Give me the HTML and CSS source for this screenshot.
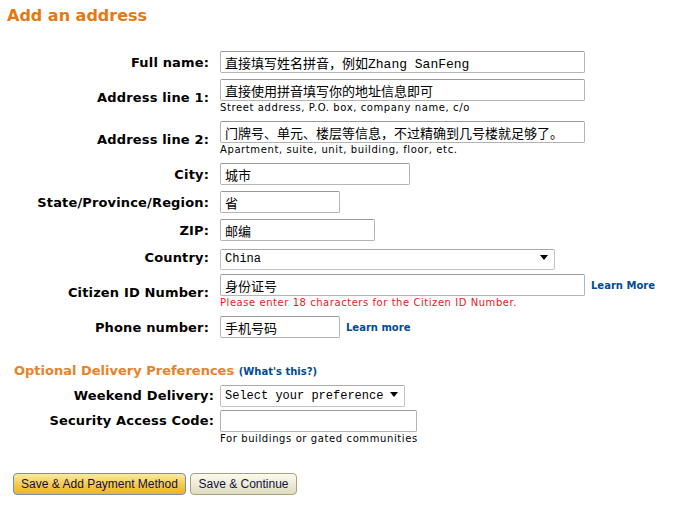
FILE: index.html
```html
<!DOCTYPE html>
<html lang="en">
<head>
  <meta charset="UTF-8" />
  <title>Add an address</title>
  <link rel="stylesheet" href="styles.css">
</head>
<body>
<h1 class="page-title">Add an address</h1>

<form class="address-form">
  <div class="form-grid">
    <label class="field-label" for="full-name">Full name:</label>
    <div class="field">
      <input id="full-name" class="text-input w-long" value="直接填写姓名拼音，例如Zhang SanFeng">
    </div>

    <label class="field-label" for="addr1">Address line 1:</label>
    <div class="field">
      <input id="addr1" class="text-input w-long" value="直接使用拼音填写你的地址信息即可">
      <div class="hint">Street address, P.O. box, company name, c/o</div>
    </div>

    <label class="field-label" for="addr2">Address line 2:</label>
    <div class="field">
      <input id="addr2" class="text-input w-long" value="门牌号、单元、楼层等信息，不过精确到几号楼就足够了。">
      <div class="hint">Apartment, suite, unit, building, floor, etc.</div>
    </div>

    <label class="field-label" for="city">City:</label>
    <div class="field">
      <input id="city" class="text-input w-city" value="城市">
    </div>

    <label class="field-label" for="state">State/Province/Region:</label>
    <div class="field">
      <input id="state" class="text-input w-short" value="省">
    </div>

    <label class="field-label" for="zip">ZIP:</label>
    <div class="field">
      <input id="zip" class="text-input w-zip" value="邮编">
    </div>

    <label class="field-label" for="country">Country:</label>
    <div class="field">
      <div class="select-box w-country">
        <select id="country" class="select-input">
          <option>China</option>
        </select>
      </div>
    </div>

    <label class="field-label" for="citizen">Citizen ID Number:</label>
    <div class="field">
      <div class="field-row">
        <input id="citizen" class="text-input w-long" value="身份证号">
        <a href="#" class="help-link">Learn More</a>
      </div>
      <div class="hint error">Please enter 18 characters for the Citizen ID Number.</div>
    </div>

    <label class="field-label" for="phone">Phone number:</label>
    <div class="field">
      <div class="field-row">
        <input id="phone" class="text-input w-short" value="手机号码">
        <a href="#" class="help-link">Learn more</a>
      </div>
    </div>
  </div>

  <h2 class="section-title">Optional Delivery Preferences <a href="#" class="whats-this">(What's this?)</a></h2>

  <div class="form-grid form-grid-wide">
    <label class="field-label" for="weekend">Weekend Delivery:</label>
    <div class="field">
      <div class="select-box tall w-weekend">
        <select id="weekend" class="select-input">
          <option>Select your preference</option>
        </select>
      </div>
    </div>

    <label class="field-label top" for="sac">Security Access Code:</label>
    <div class="field">
      <input id="sac" class="text-input w-sac" value="">
      <div class="hint">For buildings or gated communities</div>
    </div>
  </div>

  <div class="actions">
    <button type="button" class="btn btn-primary">Save &amp; Add Payment Method</button>
    <button type="button" class="btn btn-secondary">Save &amp; Continue</button>
  </div>
</form>
</body>
</html>
```

FILE: styles.css
```css
:root { --orange:#E47911; --link:#004B91; --text:#000; --border:#b4b4b4; }
* { box-sizing: border-box; }
body { margin:0; background:#fff; color:var(--text); font-family:'DejaVu Sans',Verdana,sans-serif; }

.page-title { margin:0; padding:5px 0 0 7px; line-height:22px; font-size:16px; font-weight:bold; color:var(--orange); }

.address-form { margin-top:24px; }
.form-grid { display:grid; grid-template-columns:209px 1fr; column-gap:11px; row-gap:6px; align-items:center; }
.form-grid-wide { grid-template-columns:214px 1fr; column-gap:6px; row-gap:4px; }
.field-label { text-align:right; font-size:13px; font-weight:bold; letter-spacing:.15px; white-space:nowrap; }
.field-label.top { align-self:start; line-height:22px; }
.field { display:flex; flex-direction:column; align-items:flex-start; }
.field-row { display:flex; align-items:center; gap:6px; }

.text-input { height:22px; padding:0 4px; border:1px solid var(--border); border-top-color:#999; border-radius:2px; font-family:'Liberation Mono','Noto Sans CJK SC',monospace; font-size:13px; color:#000; background:#fff; }
.w-long { width:365px; }
.w-city { width:190px; }
.w-short { width:120px; }
.w-zip { width:155px; }
.w-country { width:335px; }
.w-weekend { width:185px; }
.w-sac { width:197px; }

.select-box { position:relative; height:21px; }
.select-box.tall, .select-box.tall .select-input { height:22px; }
.select-box::after { content:''; position:absolute; right:7px; top:8px; border-left:4px solid transparent; border-right:4px solid transparent; border-top:5px solid #000; pointer-events:none; }
.select-input { appearance:none; -webkit-appearance:none; width:100%; height:21px; padding:0 4px; border:1px solid #c3c3c3; border-top-color:#aaa; border-radius:2px; background:#fff; font-family:'Liberation Mono','Noto Sans CJK SC',monospace; font-size:12px; color:#000; }

.hint { font-size:10px; line-height:14px; letter-spacing:.6px; color:#000; white-space:nowrap; }
.hint.error { color:#e8171b; letter-spacing:.55px; }
.help-link { font-size:10px; font-weight:bold; color:var(--link); text-decoration:none; }

.section-title { margin:24px 0 3px 14px; line-height:18px; font-size:13px; font-weight:bold; color:#e8822a; }
.whats-this { font-size:10px; color:var(--link); text-decoration:none; }

.actions { display:flex; gap:4px; margin:27px 0 0 13px; }
.btn { height:22px; padding:0; border-radius:4px; font-family:'Liberation Sans',Arial,sans-serif; font-size:12px; white-space:nowrap; color:#111149; cursor:pointer; }
.btn-primary { width:173px; border:1px solid #7a8fb0; background:linear-gradient(#fde9a6,#f6c84a 55%,#eeb22d); }
.btn-secondary { width:107px; border:1px solid #aaa27c; background:linear-gradient(#fbfaf0,#ece8d2 60%,#dedbbf); }
```
